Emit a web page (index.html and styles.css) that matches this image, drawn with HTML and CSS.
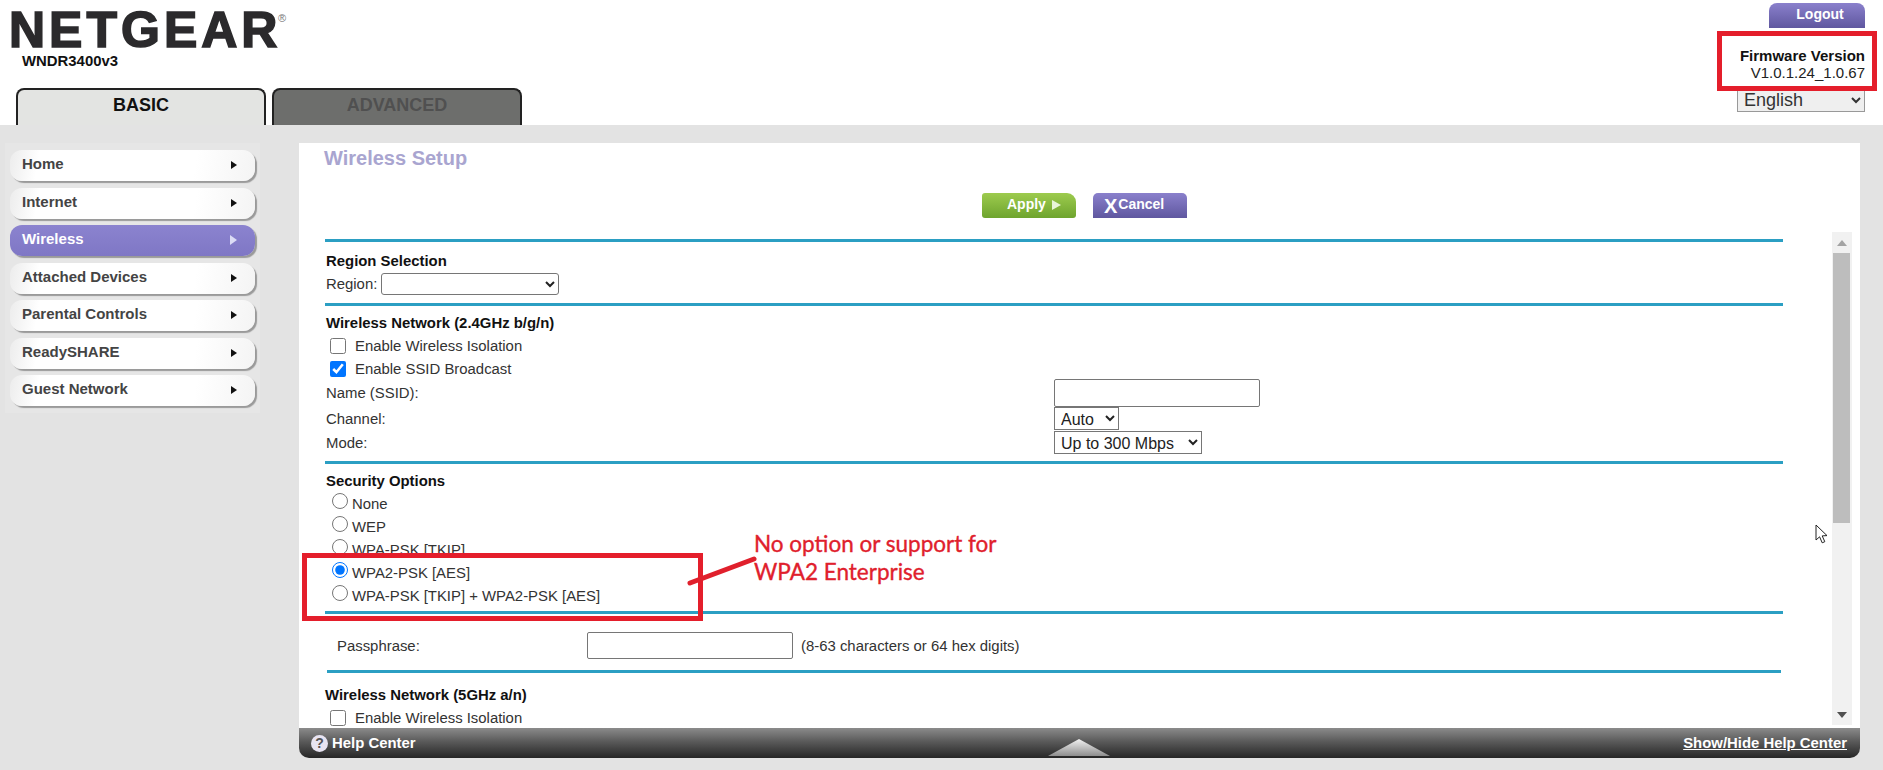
FILE: index.html
```html
<!DOCTYPE html>
<html lang="en">
<head>
<meta charset="utf-8">
<title>NETGEAR WNDR3400v3</title>
<link rel="stylesheet" href="styles.css">
</head>
<body>
<header class="top">
  <div class="brand">
    <div class="logo">NETGEAR<sup class="reg">®</sup></div>
    <div class="model">WNDR3400v3</div>
    <nav class="tabs">
      <div class="tab tab-on">BASIC</div>
      <div class="tab tab-off">ADVANCED</div>
    </nav>
  </div>
  <div class="status">
    <button class="logout">Logout</button>
    <div class="fw fw-title">Firmware Version</div>
    <div class="fw">V1.0.1.24_1.0.67</div>
    <select class="lang"><option>English</option></select>
  </div>
</header>

<div class="layout">
  <aside class="side">
    <a class="item">Home</a>
    <a class="item">Internet</a>
    <a class="item item-on">Wireless</a>
    <a class="item">Attached Devices</a>
    <a class="item">Parental Controls</a>
    <a class="item">ReadySHARE</a>
    <a class="item">Guest Network</a>
  </aside>

  <main class="main">
    <section class="panel">
      <h1 class="title">Wireless Setup</h1>
      <div class="actions">
        <button class="btn btn-apply">Apply<span class="play"></span></button>
        <button class="btn btn-cancel"><span class="x">X</span>Cancel</button>
      </div>
      <div class="scroller">
        <form class="form">
          <div class="rule"></div>
          <div class="head head-first">Region Selection</div>
          <div class="row row-region"><span class="inline-label">Region:</span><select class="sel sel-region"><option></option></select></div>
          <div class="rule rule-a"></div>

          <div class="head">Wireless Network (2.4GHz b/g/n)</div>
          <label class="check"><input type="checkbox"><span>Enable Wireless Isolation</span></label>
          <label class="check"><input type="checkbox" checked><span>Enable SSID Broadcast</span></label>
          <div class="row row-name"><span class="col-label">Name (SSID):</span><input class="text text-ssid" type="text"></div>
          <div class="row row-channel"><span class="col-label">Channel:</span><select class="sel sel-auto"><option>Auto</option></select></div>
          <div class="row row-mode"><span class="col-label">Mode:</span><select class="sel sel-mode"><option>Up to 300 Mbps</option></select></div>
          <div class="rule rule-a"></div>

          <div class="head">Security Options</div>
          <label class="radio"><input type="radio" name="sec"><span>None</span></label>
          <label class="radio"><input type="radio" name="sec"><span>WEP</span></label>
          <label class="radio"><input type="radio" name="sec"><span>WPA-PSK [TKIP]</span></label>
          <label class="radio"><input type="radio" name="sec" checked><span>WPA2-PSK [AES]</span></label>
          <label class="radio"><input type="radio" name="sec"><span>WPA-PSK [TKIP] + WPA2-PSK [AES]</span></label>
          <div class="rule rule-b"></div>

          <div class="row row-pass"><span class="pass-label">Passphrase:</span><input class="text text-pass" type="text"><span class="hint">(8-63 characters or 64 hex digits)</span></div>
          <div class="rule rule-c"></div>

          <div class="head head-5g">Wireless Network (5GHz a/n)</div>
          <label class="check"><input type="checkbox"><span>Enable Wireless Isolation</span></label>
        </form>
        <div class="scrollbar">
          <div class="sb-btn"><span class="sb-up"></span></div>
          <div class="sb-thumb"></div>
          <div class="sb-track"></div>
          <div class="sb-btn"><span class="sb-down"></span></div>
        </div>
      </div>
    </section>
    <footer class="help">
      <div class="help-left"><span class="qmark">?</span>Help Center</div>
      <svg class="help-arrow" width="62" height="17" viewBox="0 0 62 17">
        <defs><linearGradient id="tri" x1="0" y1="0" x2="0" y2="1"><stop offset="0" stop-color="#f2f2f2"/><stop offset="1" stop-color="#8e8e8e"/></linearGradient></defs>
        <polygon points="31,0 62,17 0,17" fill="url(#tri)"/>
      </svg>
      <a class="help-right">Show/Hide Help Center</a>
    </footer>
  </main>
</div>

<div class="mark mark-fw"></div>
<div class="mark mark-sec"></div>
<svg class="pointer-line" width="70" height="30" viewBox="0 0 70 30"><line x1="3" y1="27" x2="67" y2="3" stroke="#e0202c" stroke-width="5" stroke-linecap="round"/></svg>
<div class="note">No option or support for<br>WPA2 Enterprise</div>
<svg class="cursor" width="14" height="20" viewBox="0 0 14 20"><path d="M1 1 L1 16 L4.6 12.8 L7.2 18.8 L9.8 17.7 L7.2 11.9 L12 11.6 Z" fill="#fff" stroke="#222" stroke-width="1"/></svg>
</body>
</html>
```
FILE: styles.css
```css
* { box-sizing: border-box; }
html, body { margin: 0; padding: 0; }
body {
  width: 1883px; height: 770px; overflow: hidden; position: relative;
  background: #e3e3e3; color: #333;
  font-family: "Liberation Sans", Arial, sans-serif; font-size: 14.9px;
}
.top {
  height: 125px; background: #fff;
  display: flex; justify-content: space-between;
}
.brand { padding: 11px 0 0 9px; }
.logo {
  font-weight: 700; font-size: 50px; line-height: 39px; letter-spacing: 4px; color: #2b2a2c;
  -webkit-text-stroke: 1.6px #2b2a2c; position: relative; white-space: nowrap;
}
.reg {
  font-size: 11px; font-weight: 400; letter-spacing: 0; -webkit-text-stroke: 0; color: #777;
  position: absolute; top: 1px; left: 269px; line-height: 12px;
}
.model { margin: 2px 0 0 13px; font-size: 14.9px; font-weight: 700; line-height: 18px; color: #111; }
.tabs { display: flex; gap: 6px; margin: 18px 0 0 7px; }
.tab {
  width: 250px; height: 37px;
  border: 2px solid #222; border-bottom: 0; border-radius: 8px 8px 0 0;
  text-align: center; font-size: 18px; font-weight: 700; line-height: 31px;
}
.tab-on { background: #e3e4e2; color: #111; }
.tab-off { background: #6d6e6c; color: #505050; }

.status { display: flex; flex-direction: column; align-items: flex-end; padding-right: 18px; }
.logout {
  margin-top: 3px; width: 96px; height: 25px; padding: 0 0 3px 6px; border: 0;
  border-radius: 8px 8px 0 0;
  background: linear-gradient(#8a80cc, #5f579f);
  color: #fff; font: 700 14px "Liberation Sans", Arial, sans-serif;
}
.fw { font-size: 15px; line-height: 17px; color: #222; }
.fw-title { margin-top: 19px; font-weight: 700; color: #111; }
.fw-title + .fw { margin-bottom: 1px; }
.lang {
  margin-top: 6px; width: 128px; height: 24px; padding: 0 0 0 2px;
  font: 500 18px "Liberation Sans", Arial, sans-serif; color: #333;
  background: #efefef; border: 1px solid #999; border-radius: 0;
}

.layout { display: flex; padding-top: 18px; }
.side {
  width: 255px; margin: 0 39px 0 5px; height: 270px; padding: 7px 5px 0;
  background: #e6e6e6; display: flex; flex-direction: column; gap: 6.5px;
}
.item {
  position: relative; display: block; height: 31px; width: 245px; padding-left: 12px;
  border-radius: 12px;
  background: linear-gradient(100deg, #ececec 0, #fff 12%, #fff 75%, #f4f4f4 100%);
  box-shadow: 2px 2px 1px #9a9a9a;
  font-size: 15px; font-weight: 700; line-height: 27px; color: #444;
}
.item::after {
  content: ""; position: absolute; right: 18px; top: 11px;
  border-left: 6px solid #111; border-top: 4px solid transparent; border-bottom: 4px solid transparent;
}
.item-on { background: linear-gradient(#8b83cf, #7f77c5); color: #fff; }
.item-on::after { border-left: 7px solid #dcdcf5; border-top-width: 5px; border-bottom-width: 5px; top: 10px; }

.main { width: 1561px; }
.panel { height: 585px; background: #fff; display: flex; flex-direction: column; }
.title { margin: 0; padding-left: 25px; height: 30px; font-size: 20px; font-weight: 700; line-height: 30px; color: #a9a5d0; }
.actions { display: flex; gap: 17px; margin-top: 20px; padding-left: 683px; height: 25px; }
.btn {
  height: 25px; border: 0; padding: 0 0 4px; color: #fff;
  font: 700 14px "Liberation Sans", Arial, sans-serif;
  display: flex; align-items: center;
}
.btn-apply {
  width: 94px; padding-left: 25px; border-radius: 3px 9px 3px 3px;
  background: linear-gradient(#9dcb4e, #6ea42e);
}
.play {
  margin: 3px 0 0 6px;
  border-left: 9px solid #e8f5d8; border-top: 5px solid transparent; border-bottom: 5px solid transparent;
}
.btn-cancel {
  width: 94px; padding-left: 11px;
  border-radius: 5px 5px 0 0;
  background: linear-gradient(#8a80cc, #5f579f);
}
.x { font-size: 20px; margin: 5px 1px 0 0; line-height: 18px; }

.scroller { display: flex; height: 496px; margin-top: 14px; overflow: hidden; }
.form { width: 1533px; padding: 7px 0 0 26px; color: #333; }
.rule { width: 1458px; height: 3px; background: #2b9fc3; }
.rule-a { margin-top: 8px; }
.rule-b { margin-top: 3px; }
.rule-c { margin: 11px 0 0 2px; width: 1454px; }
.head { margin-top: 5px; padding-left: 1px; height: 24px; font-weight: 700; line-height: 24px; color: #111; }
.head-first { margin-top: 7px; }
.head-5g { margin-top: 10px; padding-left: 0; }
.row { display: flex; align-items: center; padding-left: 1px; }
.row-region { height: 22px; margin-bottom: 0; }
.row-name { height: 28px; margin-top: -1px; }
.row-channel { height: 23px; }
.row-mode { height: 23px; margin-top: 1px; }
.row-mode + .rule-a { margin-top: 7px; }
.row-region + .rule-a { margin-top: 8px; }
.row-pass { height: 27px; margin-top: 18px; padding-left: 12px; }
.inline-label { margin-right: 4px; }
.col-label { width: 728px; }
.pass-label { width: 250px; }
.hint { margin-left: 8px; }

.sel {
  font: 16px "Liberation Sans", Arial, sans-serif; color: #222; background: #fff;
  border: 1px solid #767676; height: 23px; padding: 1px 0 0 2px;
}
.sel-region { width: 178px; height: 22px; border-radius: 3px; }
.sel-auto { width: 65px; }
.sel-mode { width: 148px; }
.text { height: 28px; border: 1px solid #767676; border-radius: 2px; background: #fff; padding: 0; }
.text-ssid { width: 206px; }
.text-pass { width: 206px; height: 27px; }

.check { display: flex; align-items: center; height: 22px; padding-left: 5px; }
.check + .check { height: 23px; }
.check input { width: 16px; height: 16px; margin: 0 9px 0 0; flex: none; }
.radio { display: flex; align-items: flex-start; height: 23px; padding-left: 7px; line-height: 22px; }
.radio input { width: 16px; height: 16px; margin: 0 4px 0 0; flex: none; }

.scrollbar { width: 20px; height: 493px; background: #f1f1f1; display: flex; flex-direction: column; }
.sb-btn { height: 21px; display: flex; align-items: center; justify-content: center; flex: none; }
.sb-up { border-bottom: 6px solid #a3a3a3; border-left: 5px solid transparent; border-right: 5px solid transparent; }
.sb-down { border-top: 6px solid #505050; border-left: 5px solid transparent; border-right: 5px solid transparent; }
.sb-thumb { height: 270px; width: 17px; margin-left: 1px; background: #bdbdbd; flex: none; }
.sb-track { flex: 1; }

.help {
  height: 30px; border-radius: 0 0 10px 10px;
  background: linear-gradient(#8b8b8b, #5a5a5a 45%, #262626);
  display: grid; grid-template-columns: 1fr auto 1fr; align-items: center;
  padding: 0 13px 0 12px; color: #fff; font-weight: 700; font-size: 14.9px;
}
.help-left { display: flex; align-items: center; }
.qmark {
  width: 17px; height: 17px; border-radius: 50%; margin-right: 4px;
  background: #e8e4f2; color: #555; font-size: 14px; line-height: 17px; text-align: center;
}
.help-arrow { margin-top: 9px; }
.help-right { justify-self: end; text-decoration: underline; }

.mark { position: absolute; border: 5px solid #e41e2b; }
.mark-fw { left: 1717px; top: 31px; width: 160px; height: 60px; }
.mark-sec { left: 302px; top: 553px; width: 401px; height: 68px; }
.pointer-line { position: absolute; left: 687px; top: 556px; }
.note {
  position: absolute; left: 754px; top: 530px;
  font-family: Lato, sans-serif; font-size: 22.5px; font-weight: 400; line-height: 28px; color: #e0202c;
  -webkit-text-stroke: 0.35px #e0202c; white-space: nowrap;
}
.cursor { position: absolute; left: 1815px; top: 524px; }
```
